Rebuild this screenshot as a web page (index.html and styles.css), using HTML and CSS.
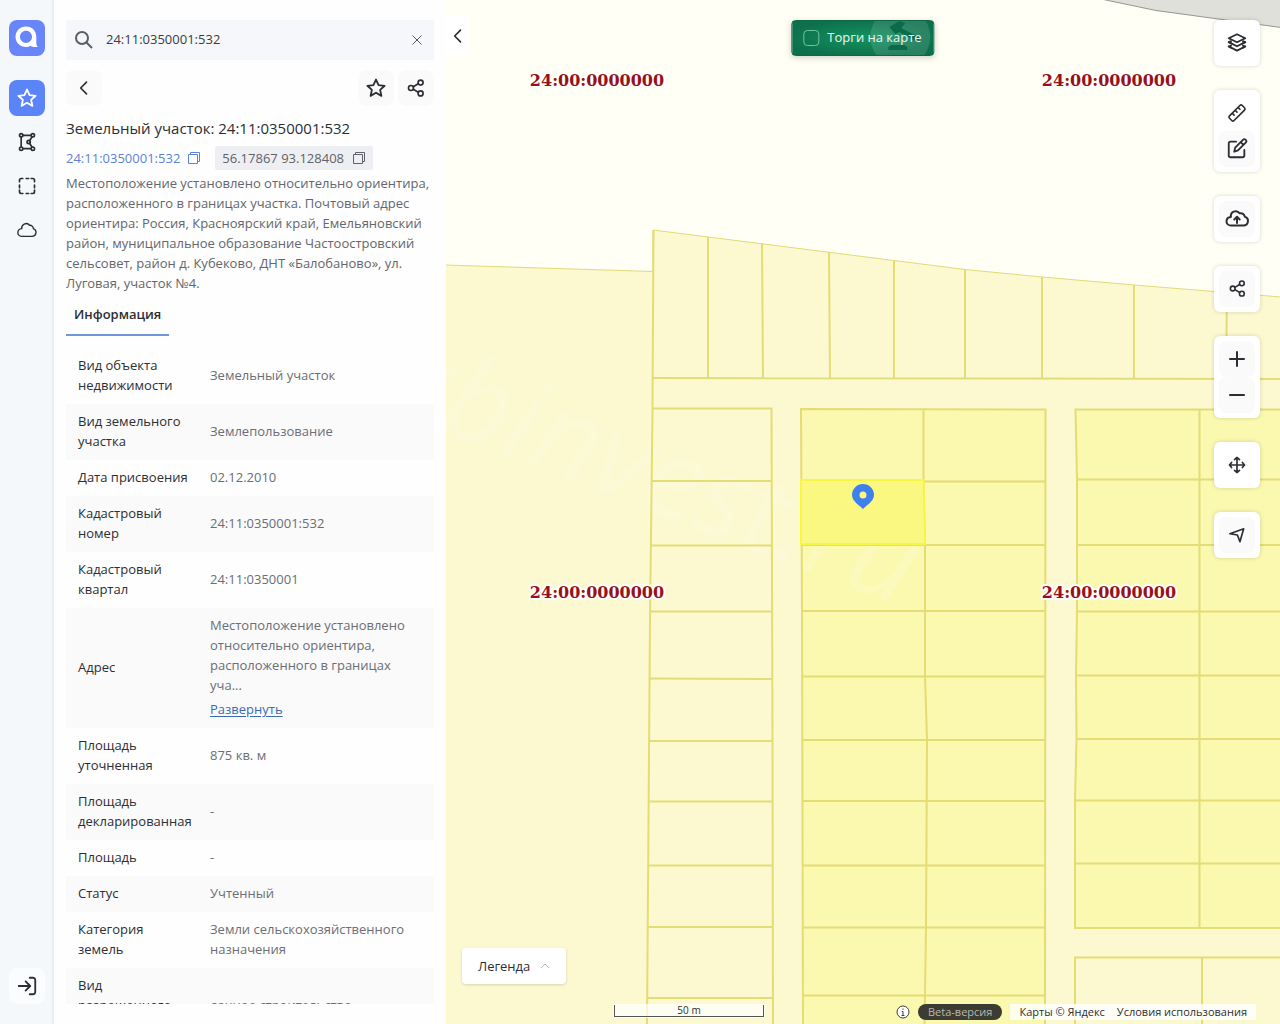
FILE: index.html
```html
<!DOCTYPE html>
<html lang="ru">
<head>
<meta charset="utf-8">
<title>Земельный участок: 24:11:0350001:532</title>
<meta name="viewport" content="width=device-width, initial-scale=1">
<link rel="stylesheet" href="styles.css">
</head>
<body class="app">
<svg class="sprite" width="0" height="0" aria-hidden="true">
  <symbol id="star" viewBox="0 0 24 24"><path d="M12 2.800l2.800 6.100 6.600.7-4.900 4.400 1.400 6.600L12 17.200l-5.900 3.400 1.400-6.600-4.900-4.400 6.600-.7z"/></symbol>
  <symbol id="share" viewBox="0 0 24 24"><circle cx="6" cy="12" r="3"/><circle cx="17.500" cy="5.500" r="3"/><circle cx="17.500" cy="18.500" r="3"/><path d="M8.700 10.500l6-3.500M8.700 13.500l6 3.500"/></symbol>
  <symbol id="copy" viewBox="0 0 14 14"><path d="M1.500 3.500h9v9h-9zM3.500 3.500v-2h9v9h-2"/></symbol>
</svg>

<nav class="rail" aria-label="Разделы">
  <a class="rail-logo" href="#" aria-label="Главная">
    <svg viewBox="0 0 36 36" width="36" height="36"><path fill="#fff" fill-rule="evenodd" d="M17 6.500c6 0 10 4 10.300 10v6.500c0 1.700.6 2.900 1.700 4h-4.500c-1.300 0-2.200-.5-2.800-1.200-1.400.8-3 1.200-4.700 1.200-6 0-10.500-4.400-10.500-10.200S11 6.500 17 6.500zm0 4.200c-3.400 0-6 2.700-6 6.100s2.600 6.100 6 6.100 6-2.700 6-6.100-2.600-6.100-6-6.100z"/></svg>
  </a>
  <button class="rail-btn rail-btn-active" aria-label="Избранное"><svg class="icon" width="22" height="22"><use href="#star"/></svg></button>
  <button class="rail-btn" aria-label="Полигон"><svg class="icon" viewBox="0 0 24 24" width="20" height="20"><circle cx="5" cy="4" r="2"/><circle cx="19" cy="4" r="2"/><circle cx="5" cy="20" r="2"/><circle cx="19" cy="20" r="2"/><circle cx="14" cy="12" r="2"/><path d="M5 6v12M7 4h10M7 20h10M18 6l-3 4.500M18 18l-3-4.500"/></svg></button>
  <button class="rail-btn" aria-label="Выделение"><svg class="icon" viewBox="0 0 24 24" width="20" height="20"><path d="M3 7V5a2 2 0 0 1 2-2h2M11 3h3M17 3h2a2 2 0 0 1 2 2v2M21 11v3M21 17v2a2 2 0 0 1-2 2h-2M14 21h-3M7 21H5a2 2 0 0 1-2-2v-2M3 14v-3"/></svg></button>
  <button class="rail-btn" aria-label="Облако"><svg class="icon icon-thin" viewBox="0 0 24 24" width="22" height="22"><path d="M6.500 19h11a4.300 4.300 0 0 0 1.600-8.300C18.800 7.800 16.500 6.500 14.800 7 13.500 5 11 4.500 9 5.500c-2 1-3 3-2.700 5C3.500 10.800 2 13 2 15c0 2.200 2 4 4.500 4z"/></svg></button>
  <button class="rail-btn rail-login" aria-label="Войти"><svg class="icon" viewBox="0 0 24 24" width="22" height="22"><path d="M3 12h12M10.500 7l5 5-5 5M15 3h3.500A2.500 2.500 0 0 1 21 5.500v13a2.500 2.500 0 0 1-2.500 2.500H15"/></svg></button>
</nav>

<aside class="panel">
  <form class="search" role="search">
    <svg class="search-icon" viewBox="0 0 20 20" width="20" height="20" aria-hidden="true"><circle cx="8" cy="8" r="6"/><path d="M12.500 12.500L18 18"/></svg>
    <input class="search-input" type="text" value="24:11:0350001:532" aria-label="Поиск">
    <button class="search-clear" type="button" aria-label="Очистить"><svg viewBox="0 0 12 12" width="12" height="12"><path d="M1.500 1.500l9 9M10.500 1.500l-9 9"/></svg></button>
  </form>
  <div class="panel-scroll">
    <div class="tools">
      <button class="tool tool-back" aria-label="Назад"><svg class="icon" viewBox="0 0 24 24" width="20" height="20"><path d="M15 5l-7 7 7 7"/></svg></button>
      <button class="tool" aria-label="В избранное"><svg class="icon" width="22" height="22"><use href="#star"/></svg></button>
      <button class="tool" aria-label="Поделиться"><svg class="icon" width="20" height="20"><use href="#share"/></svg></button>
    </div>
    <h1 class="title">Земельный участок: 24:11:0350001:532</h1>
    <div class="codes">
      <a class="code-link" href="#">24:11:0350001:532<svg class="copy" width="14" height="14"><use href="#copy"/></svg></a>
      <button class="code-chip">56.17867 93.128408<svg class="copy" width="14" height="14"><use href="#copy"/></svg></button>
    </div>
    <p class="address">Местоположение установлено относительно ориентира,<br>расположенного в границах участка. Почтовый адрес<br>ориентира: Россия, Красноярский край, Емельяновский<br>район, муниципальное образование Частоостровский<br>сельсовет, район д. Кубеково, ДНТ «Балобаново», ул.<br>Луговая, участок №4.</p>
    <div class="tabs"><button class="tab">Информация</button></div>
    <table class="facts">
      <tr><th scope="row">Вид объекта<br>недвижимости</th><td>Земельный участок</td></tr>
      <tr><th scope="row">Вид земельного<br>участка</th><td>Землепользование</td></tr>
      <tr><th scope="row">Дата присвоения</th><td>02.12.2010</td></tr>
      <tr><th scope="row">Кадастровый<br>номер</th><td>24:11:0350001:532</td></tr>
      <tr><th scope="row">Кадастровый<br>квартал</th><td>24:11:0350001</td></tr>
      <tr><th scope="row">Адрес</th><td>Местоположение установлено<br>относительно ориентира,<br>расположенного в границах<br>уча...<a class="expand" href="#">Развернуть</a></td></tr>
      <tr><th scope="row">Площадь<br>уточненная</th><td>875 кв. м</td></tr>
      <tr><th scope="row">Площадь<br>декларированная</th><td>-</td></tr>
      <tr><th scope="row">Площадь</th><td>-</td></tr>
      <tr><th scope="row">Статус</th><td>Учтенный</td></tr>
      <tr><th scope="row">Категория<br>земель</th><td>Земли сельскохозяйственного<br>назначения</td></tr>
      <tr><th scope="row">Вид<br>разрешенного<br>использования</th><td>дачное строительство</td></tr>
    </table>
  </div>
</aside>

<main class="map">
  <svg class="map-canvas" viewBox="446 0 834 1024" preserveAspectRatio="xMinYMin slice" aria-label="Кадастровая карта">
    <path class="outside" d="M1101-1L1156 10.500 1281 27.500V-1z"/>
    <path class="land" d="M445 265L653 271.500V230L965 269.500 1042 277 1134 285 1281 297V1025H445z"/>
    <g class="parcels-dark">
      <path d="M801 409H1045.500L1045 1025H803L802 610z"/>
      <path d="M1075.500 409.500H1281V928H1075V800L1077 739 1076 676 1077 611V479z"/>
    </g>
    <text class="watermark" transform="translate(393 412) rotate(21)">rbinvest.ru</text>
    <g class="lines">
      <path d="M653.500 230L652.500 408 650 620 647 1025"/>
      <path d="M708 237V378M762 243.500L763 378M829 252L830 378M894 260.500V378M965 269.500V378M1042 277V378M1134 285V378M1227 292L1226 378M653 378L1281 379"/>
      <path d="M652 408.500H771.500L772.500 741 773 1025M652 481H772M651 545.500H772M651 611.500H772M650 678.500L772 679M650 741H773M649 801.500H773M648 865.500H773M648 927H773M647 998H773"/>
      <path d="M803 1025L802 610 801 409 1045.500 409.500 1045 1025M923.500 409V480L925 545V676L927 740 926 927 924.500 1025M924 481.500H1045M801 545H1045M801 611H1045M801 676.500H1045M802 740H1045M802 801H1045M803 865.500H1045M803 927.500H1045M803 995.500H1045"/>
      <path d="M1281 409.500H1075.500L1077 479V611L1076 676 1076.500 739 1075 800V928H1281M1199.500 409.500V928M1077 479.500H1281M1077 545H1281M1077 611.500H1281M1076 675.500H1281M1077 739H1281M1075 800.500H1281M1075 863.500H1281M1075 1025V957.500H1281M1202 957.500V1025"/>
    </g>
    <path class="selected" d="M801 480H923.500L925 544H801z"/>
    <path class="pin" fill-rule="evenodd" d="M863 509c-3-3.500-11-7.500-11-14a11 11 0 0 1 22 0c0 6.500-8 10.500-11 14zm0-10.500a3.500 3.500 0 1 0 0-7 3.500 3.500 0 0 0 0 7z"/>
    <g class="quarter">
      <text x="597" y="86">24:00:0000000</text><text x="1109" y="86">24:00:0000000</text>
      <text x="597" y="598">24:00:0000000</text><text x="1109" y="598">24:00:0000000</text>
    </g>
  </svg>

  <button class="collapse" aria-label="Свернуть панель"><svg class="icon" viewBox="0 0 24 24" width="20" height="20"><path d="M15 5l-7 7 7 7"/></svg></button>

  <label class="auction">
    <svg class="auction-art" viewBox="0 0 64 36" width="64" height="36" aria-hidden="true"><circle class="art-disc" cx="31" cy="16" r="30"/><path class="art-gavel" d="M20 6l10-6 6 2-4 5 19 10-3 4-18-10-4 2zM19 29v-3l3-2h13l3 2v3z"/></svg>
    <input class="auction-box" type="checkbox"><span class="auction-text">Торги на карте</span>
  </label>

  <div class="controls">
    <div class="card"><button class="ctl ctl-plain" aria-label="Слои"><svg class="icon" viewBox="0 0 24 24" width="22" height="22"><path d="M12 2.500l9 4.300-9 4.400-9-4.400zM3 11l9 4.500 9-4.500M3 15.800l9 4.500 9-4.500"/><path d="M5.500 10L3 11l3 1.500M18.500 10l2.500 1-3 1.500M5.500 14.800L3 15.800l3 1.500M18.500 14.800l2.500 1-3 1.500"/></svg></button></div>
    <div class="card">
      <button class="ctl ctl-plain" aria-label="Линейка"><svg class="icon" viewBox="0 0 24 24" width="20" height="20"><path d="M3 15.500L15.500 3a2 2 0 0 1 2.800 0L21 5.700a2 2 0 0 1 0 2.800L8.500 21a2 2 0 0 1-2.800 0L3 18.300a2 2 0 0 1 0-2.800zM6.500 12.500l2 2M10 9l2 2M13.500 5.500l2 2"/></svg></button>
      <button class="ctl" aria-label="Рисовать"><svg class="icon" viewBox="0 0 24 24" width="22" height="22"><path d="M11 4H5a2 2 0 0 0-2 2v13a2 2 0 0 0 2 2h13a2 2 0 0 0 2-2v-6M9 15l1-4.500 8.500-8.500a2 2 0 0 1 3 3L13 13.500zM16 4.500L19 7.500"/></svg></button>
    </div>
    <div class="card"><button class="ctl" aria-label="Загрузить"><svg class="icon" viewBox="0 0 26 24" width="26" height="24"><path d="M7 18.500h12.500a4.500 4.500 0 0 0 1.300-8.800c-.4-2.600-2.800-4-5-3.400-1.600-2-4-2.600-6.200-1.600C7.500 5.700 6.600 7.800 6.900 10 4 10.300 2.500 12.200 2.500 14.400c0 2.300 2 4.100 4.500 4.100zM13 16v-6M10.300 12.500L13 9.800l2.700 2.700"/></svg></button></div>
    <div class="card"><button class="ctl" aria-label="Поделиться картой"><svg class="icon" width="19" height="19"><use href="#share"/></svg></button></div>
    <div class="card">
      <button class="ctl" aria-label="Приблизить"><svg class="icon" viewBox="0 0 16 16" width="16" height="16"><path d="M1 8h14M8 1v14"/></svg></button>
      <button class="ctl" aria-label="Отдалить"><svg class="icon" viewBox="0 0 16 16" width="16" height="16"><path d="M1 8h14"/></svg></button>
    </div>
    <div class="card"><button class="ctl ctl-plain" aria-label="Переместить"><svg class="icon" viewBox="0 0 24 24" width="20" height="20"><path d="M12 3v18M3 12h18M9 5.500L12 3l3 2.500M9 18.500l3 2.500 3-2.500M5.500 9L3 12l2.500 3M18.500 9l2.500 3-2.500 3"/></svg></button></div>
    <div class="card"><button class="ctl" aria-label="Моё местоположение"><svg class="icon" viewBox="0 0 24 24" width="20" height="20"><path d="M3.500 10.500L20 4.500 15.500 20l-3-8z"/></svg></button></div>
  </div>

  <button class="legend">Легенда<svg viewBox="0 0 10 6" width="10" height="6"><path d="M1 5l4-4 4 4"/></svg></button>
  <div class="scale"><span class="scale-bar">50 m</span></div>
  <footer class="credits">
    <svg class="info" viewBox="0 0 14 14" width="14" height="14" aria-hidden="true"><circle cx="7" cy="7" r="6"/><path d="M7 3.500v1.300M5.800 6.500H7v4M5.500 10.500h3"/></svg>
    <span class="beta">Beta-версия</span>
    <span class="links"><a href="#">Карты © Яндекс</a><a href="#">Условия использования</a></span>
  </footer>
</main>
</body>
</html>
```
FILE: styles.css
```css
* { box-sizing: border-box; }
button { border: 0; padding: 0; background: none; font: inherit; color: inherit; cursor: pointer; }
a { color: inherit; text-decoration: none; }

.app {
  display: flex;
  height: 100vh;
  margin: 0;
  overflow: hidden;
  font: 13px/20px "Open Sans", "Noto Sans", sans-serif;
  color: #2c2e33;
}
.sprite { position: absolute; }
.icon { fill: none; stroke: #2c2e33; stroke-width: 2; stroke-linecap: round; stroke-linejoin: round; }

/* Side rail */
.rail {
  flex: none;
  display: flex;
  flex-direction: column;
  align-items: center;
  gap: 8px;
  width: 54px;
  padding: 20px 0 20px 2px;
  background: #f4f8fa;
  border-right: 2px solid #e8eef4;
}
.rail-logo { display: block; height: 36px; margin-bottom: 16px; border-radius: 8px; background: #6886fa; }
.rail-btn { display: grid; place-items: center; width: 36px; height: 36px; border-radius: 8px; }
.rail-btn-active { background: #5b84f8; }
.rail-btn-active .icon { stroke: #fff; }
.rail-btn .icon-thin { stroke-width: 1.5; }
.rail-login { margin-top: auto; background: #fbfcfd; }

/* Information panel */
.panel {
  flex: none;
  display: flex;
  flex-direction: column;
  gap: 10px;
  width: 392px;
  padding: 20px 12px;
  background: #fefefe;
}
.search { flex: none; display: flex; align-items: center; gap: 12px; height: 40px; padding: 0 11px 0 8px; background: #f5f7fa; }
.search-icon { fill: none; stroke: #5a5e66; stroke-width: 2; }
.search-input { flex: 1; min-width: 0; border: 0; padding: 0 0 2px; background: none; font: inherit; color: #3a3c41; outline: 0; }
.search-clear svg { display: block; fill: none; stroke: #55585e; stroke-width: 1; }
.panel-scroll { flex: 1; min-height: 0; overflow: hidden; }
.tools { display: flex; gap: 4px; }
.tool { display: grid; place-items: center; width: 36px; height: 36px; border-radius: 8px; background: #fafafb; }
.tool-back { margin-right: auto; }
.title { margin: 11px 0 7px; font-size: 15px; line-height: 22px; font-weight: 500; }
.codes { display: flex; align-items: center; gap: 14px; height: 24px; font-weight: 500; }
.code-link, .code-chip { display: flex; align-items: center; height: 24px; padding-bottom: 1px; }
.code-link { gap: 7px; color: #5b83d8; }
.code-chip { gap: 8px; padding-left: 7px; padding-right: 7px; border-radius: 2px; background: #eeeff3; color: #5f6269; }
.copy { fill: none; stroke: currentColor; stroke-width: 1; }
.address { margin: 3px 0 0; color: #63666c; white-space: nowrap; }
.tabs { display: flex; }
.tab { height: 43px; padding: 0 8px; border-bottom: 2px solid #7096dc; font-weight: 600; }

.facts { width: 100%; margin-top: 12px; border-collapse: collapse; table-layout: fixed; }
.facts tr:nth-child(even) { background: #fafafb; }
.facts th, .facts td { padding: 7px 0 9px 12px; vertical-align: middle; text-align: left; white-space: nowrap; }
.facts th { width: 132px; font-weight: 500; }
.facts td { color: #6b6e74; }
.expand { display: block; margin-top: 4px; color: #3a6cb4; text-decoration: underline; text-underline-offset: 2px; }

/* Map */
.map { position: relative; flex: 1; min-width: 0; overflow: hidden; background: #fffff6; }
.map-canvas { display: block; width: 100%; height: 100%; }
.outside { fill: #dfe0da; stroke: #96968e; }
.land { fill: #fcf8d0; stroke: #e2da78; }
.parcels-dark { fill: #fbf8b0; }
.lines { fill: none; stroke: #e4dc74; stroke-width: 2; }
.selected { fill: #faf880; stroke: #f8f644; stroke-width: 2; }
.pin { fill: #3d80ee; }
.watermark { fill: #fff; fill-opacity: .15; font: italic 114px "Noto Sans", sans-serif; }
.quarter { fill: #961218; stroke: #fff; stroke-width: 4; paint-order: stroke; stroke-linejoin: round; font: bold 16px "DejaVu Serif", serif; text-anchor: middle; }

.collapse { position: absolute; left: 0; top: 16px; display: grid; place-items: center; width: 23px; height: 40px; background: #fff; border-radius: 0 4px 4px 0; }
.auction {
  position: absolute;
  top: 20px;
  left: 50%;
  transform: translateX(-50%);
  display: flex;
  align-items: center;
  gap: 8px;
  height: 36px;
  padding: 0 12px 0 11px;
  overflow: hidden;
  border: 1px solid #0d6848;
  border-radius: 4px;
  background: radial-gradient(ellipse at center, #14935f, #0d704d 75%);
  box-shadow: 0 2px 6px rgb(0 0 0 / 18%);
  color: #eef8f3;
  white-space: nowrap;
}
.auction-art { position: absolute; right: 0; top: 0; }
.art-disc { fill: #fff; fill-opacity: .12; }
.art-gavel { fill: #0b6a4a; }
.auction-box { position: relative; appearance: none; flex: none; width: 16px; height: 16px; margin: 0; border: 1px solid #6fc4a0; border-radius: 4px; }
.auction-text { position: relative; padding-bottom: 2px; }

.controls { position: absolute; top: 20px; right: 20px; display: flex; flex-direction: column; gap: 24px; }
.card { display: flex; flex-direction: column; padding: 5px; border-radius: 6px; background: #fff; box-shadow: 0 0 4px rgb(0 0 0 / 16%); }
.ctl { display: grid; place-items: center; width: 36px; height: 36px; padding-bottom: 1px; border-radius: 8px; background: #fafafb; }
.ctl-plain { background: none; }

.legend { position: absolute; left: 16px; bottom: 40px; display: flex; align-items: center; gap: 10px; height: 36px; padding: 0 16px 1px; border-radius: 4px; background: #fff; box-shadow: 0 1px 3px rgb(0 0 0 / 15%); }
.legend svg { fill: none; stroke: #b4b6ba; stroke-width: 1; }
.scale { position: absolute; right: 515px; bottom: 6px; padding: 1px; background: rgb(255 255 255 / 70%); }
.scale-bar { display: block; width: 150px; height: 12px; border: 1px solid #555; border-top: 0; font: 10px/11px "Open Sans", sans-serif; text-align: center; }
.credits { position: absolute; right: 24px; bottom: 4px; display: flex; align-items: center; gap: 8px; font-size: 11px; line-height: 16px; white-space: nowrap; }
.info { fill: #fff; stroke: #3c3e42; stroke-width: 1; }
.beta { padding: 0 10px; border-radius: 8px; background: #3c3c32; color: #b8b8b0; }
.links { display: flex; gap: 12px; padding: 0 9px; background: rgb(255 255 255 / 80%); }
```
